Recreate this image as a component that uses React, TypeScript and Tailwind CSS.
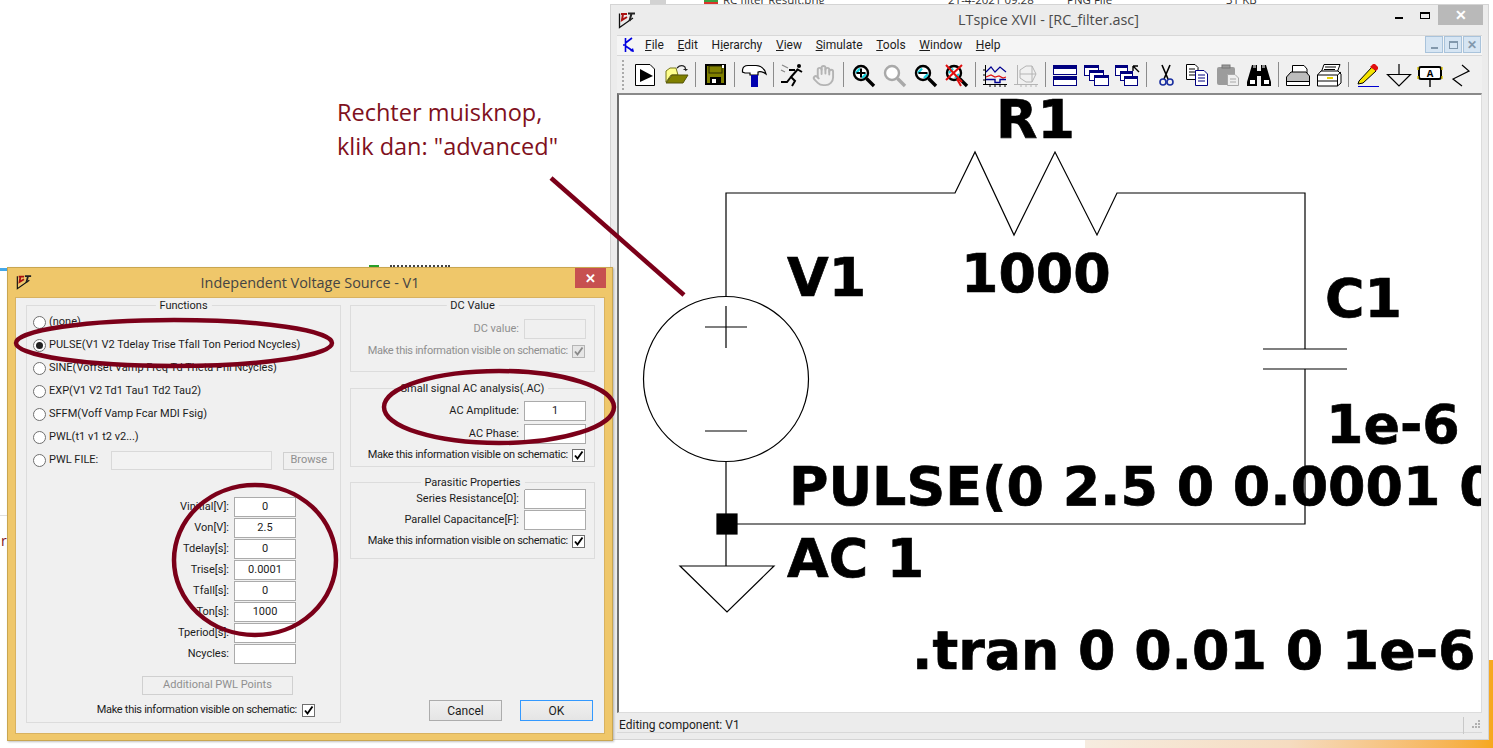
import { Hand } from "lucide-react";
import type { ReactNode } from "react";

const ui = "font-['Roboto',sans-serif]";

function Ico({ children }: { children: ReactNode }) {
  return (
    <svg width="26" height="24" viewBox="0 0 26 24" fill="none">
      {children}
    </svg>
  );
}

function LtLogo({ size = 18 }: { size?: number }) {
  return (
    <svg width={size} height={size} viewBox="0 0 18 18" fill="none">
      <path d="M1.5 2.5V16.5L15 7" stroke="#111" strokeWidth="1.3" />
      <path d="M3 3H9M5 3L4 9L9 6" stroke="#a11" strokeWidth="2" />
      <path d="M10 2.5H17M13.5 2.5L11.5 10" stroke="#222" strokeWidth="2" />
    </svg>
  );
}

function Magnifier({ grey, kind }: { grey?: boolean; kind?: "plus" | "minus" | "cancel" }) {
  const c = grey ? "#a9a9a9" : "#000";
  return (
    <Ico>
      <circle cx="11" cy="9" r="7" fill="#fff" stroke={c} strokeWidth="2.4" />
      {!grey && <path d="M6 9L10 4.5M12 14L16 10" stroke="#19d3e0" strokeWidth="2.4" />}
      <path d="M16.5 14.5L24 22" stroke={c} strokeWidth="3.4" />
      {kind === "plus" && <path d="M6.5 9H15.5M11 4.5V13.5" stroke="#000" strokeWidth="2" />}
      {kind === "minus" && <path d="M6.5 9H15.5" stroke="#000" strokeWidth="2" />}
      {kind === "cancel" && <path d="M3 1L19 18M19 1L3 16M14 15L18 22" stroke="#e01010" strokeWidth="2" />}
    </Ico>
  );
}

function Win({ x, y, w, h }: { x: number; y: number; w: number; h: number }) {
  return (
    <g>
      <rect x={x + 0.5} y={y + 0.5} width={w} height={h} fill="#fff" stroke="#000080" />
      <rect x={x} y={y} width={w + 1} height="3" fill="#000080" />
    </g>
  );
}

const icons: Record<string, ReactNode> = {
  run: (
    <Ico>
      <path d="M3.5 .5H18L22.5 5V21.5H3.5Z" fill="#fff" stroke="#000" />
      <path d="M8 5L21 12L8 18Z" fill="#000" />
    </Ico>
  ),
  open: (
    <Ico>
      <path d="M3 18V7L7 4H13L15 11H8Z" fill="#ffff8c" stroke="#77771c" />
      <path d="M3 19L9 11H25L20 19Z" fill="#808000" stroke="#55550a" />
      <path d="M14 4Q18 0 22 3L23 7M20.5 5.5H24.5" stroke="#222" strokeWidth="1.2" />
    </Ico>
  ),
  save: (
    <Ico>
      <rect x="4" y="1" width="19" height="19" fill="#808000" stroke="#000" strokeWidth="2" />
      <rect x="7" y="2" width="13" height="7" fill="#808000" stroke="#2a2a00" />
      <rect x="20" y="1" width="2" height="3" fill="#fff" />
      <rect x="8" y="13" width="11" height="7" fill="#000" />
      <rect x="10" y="15" width="4" height="4" fill="#fff" />
    </Ico>
  ),
  hammer: (
    <Ico>
      <path d="M1.5 6Q2 1.5 7 1.5H15Q23 2 25 10Q20 6.5 17 8V11H9V9H4L1.5 8Z" fill="#fff" stroke="#000" strokeWidth="1.2" />
      <rect x="10" y="11" width="7" height="12" fill="#0000b0" />
    </Ico>
  ),
  man: (
    <Ico>
      <path d="M2 1L8 4M1 6L5 8" stroke="#888" strokeWidth="1.3" />
      <circle cx="19" cy="2" r="2" fill="#000" />
      <path d="M18 5L11 13L15 17L12 22M11 13L7 18L1 18M17 5L22 8M15 6L9 6" stroke="#000" strokeWidth="2" />
    </Ico>
  ),
  hand: <Hand size={23} color="#b4b4b4" strokeWidth={2} />,
  zoomIn: <Magnifier kind="plus" />,
  zoomFit: <Magnifier grey />,
  zoomOut: <Magnifier kind="minus" />,
  zoomCancel: <Magnifier kind="cancel" />,
  wave: (
    <Ico>
      <path d="M3.5 1V21M1 20.5H25M8 20V23M13 20V23M18 20V23M23 20V23M1 6H3M1 11H3M1 16H3" stroke="#000" />
      <path d="M4 8L9 3L13 8L18 3L24 8" stroke="#000090" strokeWidth="1.2" />
      <path d="M4 13L9 11L13 13L17 12L21 14L24 13" stroke="#e01010" strokeWidth="1.2" />
      <path d="M4 15.5H13V18.5H18V15.5H24" stroke="#000090" strokeWidth="1.4" />
    </Ico>
  ),
  plot: (
    <Ico>
      <path d="M4.5 1V21M1 20.5H25M8 20V23M13 20V23M18 20V23M23 20V23" stroke="#b4b4b4" />
      <path d="M7 6L13 2H19L23 10L19 18H13L7 14ZM19 2V18M7 10H23" stroke="#b4b4b4" />
    </Ico>
  ),
  tile: (
    <Ico>
      <rect x="1.5" y="1.5" width="23" height="9" fill="#fff" stroke="#000080" />
      <rect x="1" y="1" width="24" height="4" fill="#000080" />
      <rect x="1.5" y="12.5" width="23" height="9" fill="#fff" stroke="#000080" />
      <rect x="1" y="12" width="24" height="4" fill="#000080" />
    </Ico>
  ),
  cascade: (
    <Ico>
      <Win x={1} y={1} w={14} h={10} />
      <Win x={6} y={6} w={14} h={10} />
      <Win x={11} y={11} w={14} h={10} />
    </Ico>
  ),
  arrange: (
    <Ico>
      <Win x={1} y={1} w={12} h={10} />
      <Win x={6} y={7} w={12} h={9} />
      <Win x={10} y={12} w={13} h={9} />
      <path d="M19 2H24M19 2V7M19 2L25 8" stroke="#000" strokeWidth="1.4" />
    </Ico>
  ),
  cut: (
    <Ico>
      <path d="M9 1L15 15M17 1L11 15" stroke="#000" strokeWidth="1.6" />
      <circle cx="10" cy="18" r="3" stroke="#1a2fa0" strokeWidth="1.6" />
      <circle cx="17" cy="18" r="3" stroke="#1a2fa0" strokeWidth="1.6" />
    </Ico>
  ),
  copy: (
    <Ico>
      <path d="M2.5 .5H11L14 3.5V15.5H2.5Z" fill="#fff" stroke="#000" />
      <path d="M5 5H11M5 8H11M5 11H11" stroke="#000" />
      <path d="M11.5 6.5H20L23.5 10V21.5H11.5Z" fill="#fff" stroke="#000080" />
      <path d="M14 11H21M14 14H21M14 17H21" stroke="#000080" />
    </Ico>
  ),
  paste: (
    <Ico>
      <rect x="2" y="3" width="18" height="18" rx="2" fill="#9c9c9c" />
      <rect x="7" y="1" width="8" height="3" fill="#9c9c9c" stroke="#777" />
      <path d="M12.5 10.5H20L23.5 14V21.5H12.5Z" fill="#eee" stroke="#a8a8a8" />
      <path d="M15 15H21M15 18H21" stroke="#a8a8a8" />
    </Ico>
  ),
  find: (
    <Ico>
      <path d="M6 1H11V7H15V1H20L25 18V22H15V12H11V22H1V18Z" fill="#000" />
      <rect x="4" y="16" width="5" height="4" fill="#fff" />
      <rect x="18" y="16" width="5" height="4" fill="#fff" />
      <rect x="7" y="1" width="3" height="3" fill="#888" />
      <rect x="16" y="1" width="3" height="3" fill="#888" />
    </Ico>
  ),
  print: (
    <Ico>
      <path d="M7.5 1.5H19L22 5V11H7.5Z" fill="#fff" stroke="#000" />
      <path d="M1.5 13L6 8H21L24.5 12V21.5H1.5Z" fill="#bdbdbd" stroke="#000" />
      <path d="M1.5 17.5H24.5" stroke="#000" />
      <rect x="2" y="18" width="22" height="3" fill="#fff" />
    </Ico>
  ),
  printer: (
    <Ico>
      <path d="M8 .5H24L21 9H5Z" fill="#fff" stroke="#000" />
      <path d="M9 3H20M8 5.5H19" stroke="#000" />
      <path d="M1.5 11L5 7H22L25 10V19L21.5 22H1.5Z" fill="#fff" stroke="#000" />
      <path d="M1.5 11H21.5V22M21.5 11L25 8M1.5 17H21.5" stroke="#000" />
      <rect x="11" y="13" width="6" height="2" fill="#e6d000" />
    </Ico>
  ),
  pencil: (
    <Ico>
      <path d="M4 17L17 3L21 7L8 19L3 20Z" fill="#f5e400" stroke="#000" />
      <path d="M15 3L18 0H20L23 3V5L21 7Z" fill="#e01010" />
      <path d="M3 22.5H24" stroke="#0000d0" />
    </Ico>
  ),
  ground: (
    <Ico>
      <path d="M13 0V10M1.5 10.5H24.5L13 22Z" stroke="#000" strokeWidth="1.2" />
    </Ico>
  ),
  label: (
    <Ico>
      <rect x="2" y="3" width="22" height="12" rx="2" fill="#fff" stroke="#000" strokeWidth="2" />
      <path d="M1 3V6M25 3V6M1 12V15M25 12V15" stroke="#d8c000" strokeWidth="1.4" />
      <text x="13" y="13" textAnchor="middle" fontSize="11" fontWeight="700" fontFamily="Liberation Mono, monospace" fill="#000">A</text>
      <path d="M13 15V23" stroke="#000" strokeWidth="1.4" />
    </Ico>
  ),
  resistor: (
    <Ico>
      <path d="M14 1L21 7L5 15L14 22" stroke="#000" strokeWidth="1.2" />
    </Ico>
  ),
};

const toolbar = [
  ["run", "open"],
  ["save"],
  ["hammer"],
  ["man", "hand"],
  ["zoomIn", "zoomFit", "zoomOut", "zoomCancel"],
  ["wave", "plot"],
  ["tile", "cascade", "arrange"],
  ["cut", "copy", "paste", "find"],
  ["print", "printer"],
  ["pencil", "ground", "label", "resistor"],
];

function Toolbar() {
  return (
    <div className="flex h-[37px] items-center bg-[#f0f0f0] pl-[5px]">
      <div className="mr-[5px] h-[30px] w-[2px] border-l-2 border-dotted border-[#aaa]" />
      {toolbar.map((group, i) => (
        <div key={i} className="flex items-center">
          {i > 0 && (
            <div className="flex w-[8px] justify-center">
              <div className="h-[25px] w-px bg-[#8c8c8c]" />
            </div>
          )}
          {group.map((name) => (
            <div key={name} className="flex w-[31px] items-center justify-center pt-[2px]">
              {icons[name]}
            </div>
          ))}
        </div>
      ))}
    </div>
  );
}

const menus: [string, string, string][] = [
  ["", "F", "ile"],
  ["", "E", "dit"],
  ["H", "i", "erarchy"],
  ["", "V", "iew"],
  ["", "S", "imulate"],
  ["", "T", "ools"],
  ["", "W", "indow"],
  ["", "H", "elp"],
];

function MdiButton({ children }: { children: ReactNode }) {
  return (
    <div className="flex h-[17px] w-[18px] items-center justify-center border border-[#a9c3db] bg-[#d6e5f3] text-[#6a7f92]">
      {children}
    </div>
  );
}

function LtspiceWindow() {
  return (
    <div className={`${ui} absolute left-[610px] top-[4px] flex h-[736px] w-[879px] flex-col border border-[#d4d4d4] bg-[#ececec] pb-[6px] pl-[6px] pr-[6px] text-[#1c1c1c]`}>
      <div className="relative flex h-[30px] shrink-0 items-center justify-center">
        <div className="absolute left-px top-[6px]">
          <LtLogo />
        </div>
        <span className="ml-[-2px] font-['Open_Sans',sans-serif] text-[14.4px] text-[#4a4a4a]">LTspice XVII - [RC_filter.asc]</span>
        <div className="absolute right-[79px] top-[12px] h-[2px] w-[8px] bg-black" />
        <div className="absolute right-[52px] top-[7px] h-[7px] w-[10px] border border-t-2 border-black" />
        <div className="absolute right-[-1px] top-0 flex h-[20px] w-[45px] items-center justify-center bg-[#b9b9b9] text-[14px] font-bold leading-none text-white">✕</div>
      </div>
      <div className="flex h-[21px] shrink-0 items-center border-y border-[#d8d8d8] bg-[#f5f5f5] pb-[2px] pl-[5px] text-[12px]">
        <svg width="14" height="16" viewBox="0 0 14 16" fill="none" className="mr-[9px]">
          <path d="M3.5 1V15M3.5 6L10 1M3.5 9L11 14M1 8H3" stroke="#0000e0" strokeWidth="1.6" />
          <path d="M12 15L8 14L11 11Z" fill="#0000e0" />
        </svg>
        <div className="flex gap-[13.7px]">
          {menus.map(([a, b, c]) => (
            <span key={a + b + c}>
              {a}
              <span className="underline">{b}</span>
              {c}
            </span>
          ))}
        </div>
        <div className="ml-auto mr-px flex gap-px">
          <MdiButton>
            <div className="mt-[6px] h-[2px] w-[7px] bg-[#8298ac]" />
          </MdiButton>
          <MdiButton>
            <div className="h-[8px] w-[9px] border border-t-2 border-[#8298ac]" />
          </MdiButton>
          <MdiButton>
            <span className="text-[12px] font-bold leading-none text-[#8298ac]">✕</span>
          </MdiButton>
        </div>
      </div>
      <Toolbar />
      <Schematic />
      <div className="flex h-[20px] shrink-0 items-center border-b border-[#d8d8d8] pl-[2px] pt-[5px] text-[12px]">
        <span className="flex-1">Editing component: V1</span>
        <div className="h-[17px] w-px bg-[#c8c8c8]" />
        <svg width="18" height="10" viewBox="0 0 18 10" fill="#b0b0b0">
          <rect x="14" y="0" width="2" height="2" />
          <rect x="11" y="3" width="2" height="2" />
          <rect x="14" y="3" width="2" height="2" />
          <rect x="8" y="6" width="2" height="2" />
          <rect x="11" y="6" width="2" height="2" />
          <rect x="14" y="6" width="2" height="2" />
        </svg>
      </div>
    </div>
  );
}

const labelCls = "absolute whitespace-nowrap font-['DejaVu_Sans',sans-serif] text-[53.8px] font-bold leading-[60px] text-black [-webkit-text-stroke:0.7px_black]";

function Schematic() {
  return (
    <div className="relative min-h-0 flex-1 overflow-hidden border-b border-l-2 border-r border-t-2 border-b-[#dcdcdc] border-l-[#6e6e6e] border-r-[#dcdcdc] border-t-[#8a8a8a] bg-white">
      <svg width="862" height="618" viewBox="619 95 862 618" fill="none" stroke="#000" strokeWidth="1.2" className="absolute left-0 top-0">
        <path d="M726 296V193H955L975 152L1014 235L1055 152L1097 235L1117 193H1305V349" />
        <path d="M1263 349H1347M1263 369H1347" />
        <path d="M1305 369V524H726" />
        <circle cx="726" cy="379" r="82.5" />
        <path d="M726 306V348M705 327H747M705 431H747" />
        <path d="M726 462V566" />
        <rect x="717" y="514" width="20" height="20" fill="#000" />
        <path d="M680 566H774L727 612Z" />
      </svg>
      <span className={`${labelCls} left-[377px] top-[-5px]`}>R1</span>
      <span className={`${labelCls} left-[168px] top-[153px]`}>V1</span>
      <span className={`${labelCls} left-[342px] top-[149px]`}>1000</span>
      <span className={`${labelCls} left-[706px] top-[174px]`}>C1</span>
      <span className={`${labelCls} left-[707px] top-[300px]`}>1e-6</span>
      <span className={`${labelCls} left-[170px] top-[362px]`}>PULSE(0 2.5 0 0.0001 0 1000)</span>
      <span className={`${labelCls} left-[168px] top-[434px]`}>AC 1</span>
      <span className={`${labelCls} left-[293px] top-[526px]`}>.tran 0 0.01 0 1e-6</span>
    </div>
  );
}

function Group({ title, className, children }: { title: string; className: string; children: ReactNode }) {
  return (
    <div className={`relative shrink-0 border border-[#dcdcdc] ${className}`}>
      <span className="absolute left-1/2 top-[-7px] -translate-x-1/2 whitespace-nowrap bg-[#f0f0f0] px-[4px] leading-[14px]">{title}</span>
      {children}
    </div>
  );
}

function Box({ value, disabled }: { value?: string; disabled?: boolean }) {
  return (
    <div className={`flex h-[20px] w-[62px] shrink-0 items-center justify-center border ${disabled ? "border-[#d9d9d9] bg-[#f0f0f0]" : "border-[#ababab] bg-white"}`}>{value}</div>
  );
}

function Field({ label, value, disabled, className = "" }: { label: string; value?: string; disabled?: boolean; className?: string }) {
  return (
    <div className={`flex items-center justify-end gap-[5px] ${className}`}>
      <span className={disabled ? "text-[#8f8f8f]" : ""}>{label}</span>
      <Box value={value} disabled={disabled} />
    </div>
  );
}

function Check({ disabled }: { disabled?: boolean }) {
  return (
    <div className={`flex h-[13px] w-[13px] shrink-0 items-center justify-center border ${disabled ? "border-[#b5b5b5] bg-[#e6e6e6]" : "border-[#6f6f6f] bg-white"}`}>
      <svg width="11" height="11" viewBox="0 0 11 11" fill="none">
        <path d="M2 5.5L4.5 8.5L9.5 1.5" stroke={disabled ? "#8a8a8a" : "#000"} strokeWidth="1.9" />
      </svg>
    </div>
  );
}

function Visible({ disabled, className = "" }: { disabled?: boolean; className?: string }) {
  return (
    <div className={`mr-px flex items-center justify-end gap-[4px] ${className}`}>
      <span className={`tracking-[-0.28px] ${disabled ? "text-[#8f8f8f]" : ""}`}>Make this information visible on schematic:</span>
      <Check disabled={disabled} />
    </div>
  );
}

function Radio({ label, selected }: { label?: string; selected?: boolean }) {
  return (
    <div className="flex h-[23px] items-center gap-[3px] pl-[6px]">
      <div className="flex h-[13px] w-[13px] shrink-0 items-center justify-center rounded-full border border-[#707070] bg-white">
        {selected && <div className="h-[7px] w-[7px] rounded-full bg-[#222]" />}
      </div>
      {label && <span>{label}</span>}
    </div>
  );
}

const radios = [
  "(none)",
  "PULSE(V1 V2 Tdelay Trise Tfall Ton Period Ncycles)",
  "SINE(Voffset Vamp Freq Td Theta Phi Ncycles)",
  "EXP(V1 V2 Td1 Tau1 Td2 Tau2)",
  "SFFM(Voff Vamp Fcar MDI Fsig)",
  "PWL(t1 v1 t2 v2...)",
];

const params = [
  ["Vinitial[V]:", "0"],
  ["Von[V]:", "2.5"],
  ["Tdelay[s]:", "0"],
  ["Trise[s]:", "0.0001"],
  ["Tfall[s]:", "0"],
  ["Ton[s]:", "1000"],
  ["Tperiod[s]:", ""],
  ["Ncycles:", ""],
];

function VoltageDialog() {
  return (
    <div className={`${ui} absolute left-[7px] top-[267px] flex h-[474px] w-[606px] flex-col border border-[#c9a650] bg-[#efc76a] text-[11px] text-[#1c1c1c] shadow-[1px_1px_2px_rgba(0,0,0,0.25)]`}>
      <div className="relative flex h-[29px] shrink-0 items-center justify-center">
        <div className="absolute left-[8px] top-[6px]">
          <LtLogo size={16} />
        </div>
        <span className="font-['Open_Sans',sans-serif] text-[14.4px] text-[#444]">Independent Voltage Source - V1</span>
        <div className="absolute right-[6px] top-0 flex h-[20px] w-[31px] items-center justify-center bg-[#c75050] text-[13px] font-bold leading-none text-white">✕</div>
      </div>
      <div className="mx-[7px] mb-[6px] flex min-h-0 flex-1 gap-[9px] border border-[#d8b260] bg-[#f0f0f0] pb-[12px] pl-[10px] pt-[7px]">
        <Group title="Functions" className="h-[418px] w-[315px]">
          <div className="pt-[5px]">
            {radios.map((r, i) => (
              <Radio key={r} label={r} selected={i === 1} />
            ))}
            <div className="flex h-[23px] items-center">
              <Radio label="PWL FILE:" />
              <div className="ml-[13px] h-[19px] w-[161px] border border-[#d9d9d9] bg-[#f2f2f2]" />
              <div className="ml-[11px] flex h-[18px] w-[51px] items-center justify-center border border-[#d0d0d0] text-[#8f8f8f]">Browse</div>
            </div>
          </div>
          <div className="mt-[25px] flex w-[269px] flex-col gap-px">
            {params.map(([l, v]) => (
              <Field key={l} label={l} value={v} />
            ))}
          </div>
          <div className="ml-[115px] mt-[12px] flex h-[19px] w-[151px] items-center justify-center border border-[#d0d0d0] text-[#8f8f8f]">Additional PWL Points</div>
          <div className="mt-[7px] flex w-[288px] items-center justify-end gap-[5px]">
            <span className="tracking-[-0.28px]">Make this information visible on schematic:</span>
            <Check />
          </div>
        </Group>
        <div className="flex w-[245px] flex-col">
          <Group title="DC Value" className="h-[67px] pr-[8px] pt-[13px]">
            <Field label="DC value:" disabled />
            <Visible disabled className="mt-[4px]" />
          </Group>
          <Group title="Small signal AC analysis(.AC)" className="mt-[16px] h-[79px] pr-[8px] pt-[12px]">
            <Field label="AC Amplitude:" value="1" />
            <Field label="AC Phase:" className="mt-[3px]" />
            <Visible className="mt-[3px]" />
          </Group>
          <Group title="Parasitic Properties" className="mt-[15px] h-[77px] pr-[8px] pt-[6px]">
            <Field label="Series Resistance[Ω]:" />
            <Field label="Parallel Capacitance[F]:" className="mt-px" />
            <Visible className="mt-[3px]" />
          </Group>
          <div className="mt-auto flex justify-end gap-[18px] pr-[2px] text-[12px]">
            <div className="flex h-[21px] w-[73px] items-center justify-center border border-[#acacac] bg-gradient-to-b from-[#f0f0f0] to-[#e5e5e5]">Cancel</div>
            <div className="flex h-[21px] w-[73px] items-center justify-center border border-[#3399ff] bg-gradient-to-b from-[#f0f0f0] to-[#e5e5e5]">OK</div>
          </div>
        </div>
      </div>
    </div>
  );
}

function Backdrop() {
  return (
    <>
      {/* bits of the explorer window and wallpaper behind the two windows */}
      <div className="absolute left-[1085px] top-[660px] h-[88px] w-[408px] bg-gradient-to-r from-[#f6ece0] via-[#f5dcc0] to-[#f6a81c]" />
      <div className="absolute left-[610px] top-0 h-[4px] w-[700px] overflow-hidden font-['Open_Sans',sans-serif] text-[11.5px] leading-[16px] text-[#333]">
        <div className="absolute left-[40px] top-0 h-[4px] w-[16px] bg-[#d2d2d2]" />
        <div className="absolute left-[94px] top-0 h-[2px] w-[14px] bg-[#3aa040]" />
        <div className="absolute left-[94px] top-[2px] h-[2px] w-[14px] bg-[#d8342a]" />
        <span className="absolute left-[113px] top-[-8px] whitespace-nowrap">RC filter Result.png</span>
        <span className="absolute left-[338px] top-[-8px] whitespace-nowrap">21-4-2021 09:28</span>
        <span className="absolute left-[457px] top-[-8px] whitespace-nowrap">PNG File</span>
        <span className="absolute left-[616px] top-[-8px] whitespace-nowrap">31 KB</span>
      </div>
      <div className="absolute left-0 top-[268px] h-[3px] w-[7px] bg-[#45a8e8]" />
      <div className="absolute left-0 top-[515px] h-px w-[7px] bg-[#e0e0e0]" />
      <span className="absolute left-px top-[533px] font-['Open_Sans',sans-serif] text-[14px] leading-[16px] text-[#7f1020]">r</span>
      <div className="absolute left-[369px] top-[265px] h-[2px] w-[10px] bg-[#2aa02a]" />
      <div className="absolute left-[390px] top-[265px] h-[2px] w-[60px] border-t-2 border-dotted border-[#444]" />
    </>
  );
}

function Annotations() {
  return (
    <>
      <div className="absolute left-[337px] top-[95px] font-['Open_Sans',sans-serif] text-[23.5px] leading-[34px] text-[#7f1020]">
        <div>Rechter muisknop,</div>
        <div>klik dan: "advanced"</div>
      </div>
      <svg width="1493" height="748" viewBox="0 0 1493 748" fill="none" stroke="#7b0019" strokeWidth="4.5" className="pointer-events-none absolute left-0 top-0">
        <path d="M551 178L684 295" />
        <ellipse cx="174" cy="343" rx="158" ry="23" />
        <ellipse cx="499" cy="407" rx="115" ry="36" />
        <ellipse cx="255" cy="560" rx="81" ry="75" />
      </svg>
    </>
  );
}

export default function App() {
  return (
    <div className="relative h-[748px] w-[1493px] overflow-hidden bg-white">
      <Backdrop />
      <LtspiceWindow />
      <VoltageDialog />
      <Annotations />
    </div>
  );
}
